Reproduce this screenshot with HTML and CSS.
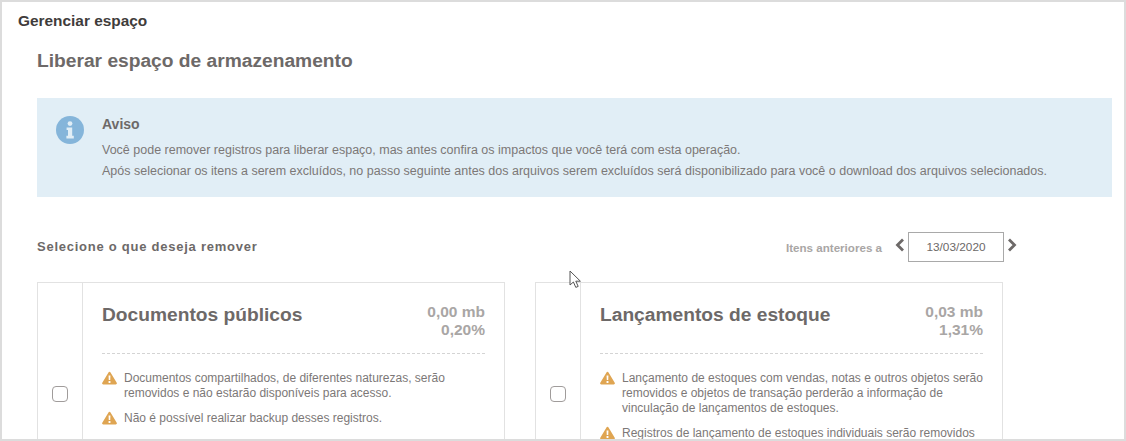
FILE: index.html
```html
<!DOCTYPE html>
<html lang="pt-BR">
<head>
    <meta charset="UTF-8">
    <title>Gerenciar espaço</title>
    <link rel="stylesheet" href="styles.css">
</head>
<body>
    <div class="frame">
        <div class="page-title">Gerenciar espaço</div>

        <div class="content">
            <h1>Liberar espaço de armazenamento</h1>

            <!-- Aviso -->
            <div class="notice">
                <svg class="notice-icon" viewBox="0 0 28 28">
                    <circle cx="14" cy="14" r="14" fill="#85b5da"/>
                    <circle cx="14" cy="7.6" r="2.4" fill="#e1eef6"/>
                    <path d="M10.6 11.4h5.6v8.4h1.6v2.6h-7.4v-2.6h1.6v-5.8h-1.4z" fill="#e1eef6"/>
                </svg>
                <div>
                    <h2>Aviso</h2>
                    <p>Você pode remover registros para liberar espaço, mas antes confira os impactos que você terá com esta operação.</p>
                    <p>Após selecionar os itens a serem excluídos, no passo seguinte antes dos arquivos serem excluídos será disponibilizado para você o download dos arquivos selecionados.</p>
                </div>
            </div>

            <div class="toolbar">
                <div class="select-label">Selecione o que deseja remover</div>
                <div class="date-filter">
                    <span class="date-label">Itens anteriores a</span>
                    <svg class="chevron" viewBox="0 0 10 14"><path d="M8 1.5 2.5 7 8 12.5" /></svg>
                    <div class="date-input">13/03/2020</div>
                    <svg class="chevron" viewBox="0 0 10 14"><path d="M2 1.5 7.5 7 2 12.5" /></svg>
                </div>
            </div>

            <div class="cards">
                <div class="card">
                    <div class="card-check"><span class="checkbox"></span></div>
                    <div class="card-body">
                        <div class="card-head">
                            <h3>Documentos públicos</h3>
                            <div class="card-size">0,00 mb<br>0,20%</div>
                        </div>
                        <ul class="warnings">
                            <li>
                                <svg class="warn" viewBox="0 0 16 14"><path d="M8 0.4c.5 0 .9.3 1.1.7l6.6 11c.5.8-.1 1.7-1 1.7H1.3c-.9 0-1.5-.9-1-1.7l6.6-11C7.1.7 7.5.4 8 .4z" fill="#dfa552"/><path d="M7 4.2h2l-.2 5H7.2zM7 10.2h2v2H7z" fill="#fff"/></svg>
                                <span>Documentos compartilhados, de diferentes naturezas, serão removidos e não estarão disponíveis para acesso.</span>
                            </li>
                            <li>
                                <svg class="warn" viewBox="0 0 16 14"><path d="M8 0.4c.5 0 .9.3 1.1.7l6.6 11c.5.8-.1 1.7-1 1.7H1.3c-.9 0-1.5-.9-1-1.7l6.6-11C7.1.7 7.5.4 8 .4z" fill="#dfa552"/><path d="M7 4.2h2l-.2 5H7.2zM7 10.2h2v2H7z" fill="#fff"/></svg>
                                <span>Não é possível realizar backup desses registros.</span>
                            </li>
                        </ul>
                    </div>
                </div>

                <div class="card">
                    <div class="card-check"><span class="checkbox"></span></div>
                    <div class="card-body">
                        <div class="card-head">
                            <h3>Lançamentos de estoque</h3>
                            <div class="card-size">0,03 mb<br>1,31%</div>
                        </div>
                        <ul class="warnings">
                            <li>
                                <svg class="warn" viewBox="0 0 16 14"><path d="M8 0.4c.5 0 .9.3 1.1.7l6.6 11c.5.8-.1 1.7-1 1.7H1.3c-.9 0-1.5-.9-1-1.7l6.6-11C7.1.7 7.5.4 8 .4z" fill="#dfa552"/><path d="M7 4.2h2l-.2 5H7.2zM7 10.2h2v2H7z" fill="#fff"/></svg>
                                <span>Lançamento de estoques com vendas, notas e outros objetos serão removidos e objetos de transação perderão a informação de vinculação de lançamentos de estoques.</span>
                            </li>
                            <li>
                                <svg class="warn" viewBox="0 0 16 14"><path d="M8 0.4c.5 0 .9.3 1.1.7l6.6 11c.5.8-.1 1.7-1 1.7H1.3c-.9 0-1.5-.9-1-1.7l6.6-11C7.1.7 7.5.4 8 .4z" fill="#dfa552"/><path d="M7 4.2h2l-.2 5H7.2zM7 10.2h2v2H7z" fill="#fff"/></svg>
                                <span>Registros de lançamento de estoques individuais serão removidos</span>
                            </li>
                        </ul>
                    </div>
                </div>
            </div>
        </div>

        <!-- Mouse pointer caught in the capture -->
        <svg class="cursor" viewBox="0 0 14 20"><path d="M1 1v14l3.4-3 2.4 5.4 2.4-1-2.4-5.2h4.6z" fill="#fff" stroke="#555" stroke-width="1"/></svg>
    </div>
</body>
</html>
```

FILE: styles.css
```css
* {
    box-sizing: border-box;
}

html, body {
    height: 100%;
}

body {
    margin: 0;
    overflow: hidden;
    background: #fff;
    font-family: "Liberation Sans", Arial, sans-serif;
    color: #6d6968;
}

.frame {
    position: relative;
    height: 441px;
    width: 1126px;
    border: 2px solid #dcdcdc;
    overflow: hidden;
}

.page-title {
    padding: 11px 0 0 16px;
    height: 47px;
    font-size: 15.4px;
    line-height: 16px;
    font-weight: bold;
    color: #3f3c3b;
}

.content {
    padding: 0 0 0 35px;
}

h1 {
    margin: 0;
    font-size: 19.2px;
    line-height: 24px;
    font-weight: bold;
    color: #6d6968;
}

/* Notice */
.notice {
    display: flex;
    margin-top: 25px;
    height: 99px;
    margin-right: 12px;
    padding: 18px 19px 0;
    background: #e1eef6;
}

.notice-icon {
    width: 28px;
    height: 28px;
    flex-shrink: 0;
    margin-right: 18px;
}

.notice h2 {
    margin: 0 0 8px;
    font-size: 14px;
    line-height: 16px;
    font-weight: bold;
    color: #6d6968;
}

.notice p {
    margin: 0;
    font-size: 12.5px;
    line-height: 21px;
    color: #7c7877;
}

/* Toolbar */
.toolbar {
    display: flex;
    align-items: center;
    justify-content: space-between;
    width: 980px;
    margin-top: 35px;
    height: 30px;
}

.select-label {
    margin-top: -2px;
    font-size: 13px;
    font-weight: bold;
    letter-spacing: 0.75px;
    color: #6d6968;
}

.date-filter {
    display: flex;
    align-items: center;
}

.date-label {
    margin-right: 13px;
    font-size: 11.6px;
    font-weight: bold;
    color: #a9a6a5;
}

.chevron {
    width: 10px;
    height: 14px;
    margin-top: -4px;
    fill: none;
    stroke: #6d6968;
    stroke-width: 2.8;
}

.date-input {
    width: 96px;
    height: 30px;
    margin: 0 3px;
    border: 1px solid #a9a9a9;
    text-align: center;
    font-size: 11.8px;
    line-height: 28px;
    color: #6d6968;
}

/* Cards */
.cards {
    display: flex;
    gap: 30px;
    margin-top: 20px;
}

.card {
    display: flex;
    width: 468px;
    height: 200px;
    border: 1px solid #e2e2e2;
}

.card-check {
    display: flex;
    justify-content: center;
    align-items: flex-start;
    width: 45px;
    padding-top: 103px;
    border-right: 1px solid #e2e2e2;
}

.checkbox {
    width: 16px;
    height: 16px;
    border: 1px solid #a09c9b;
    border-radius: 4px;
}

.card-body {
    flex: 1;
    padding: 20px 19px 0 19px;
}

.card-head {
    display: flex;
    justify-content: space-between;
    height: 51px;
    border-bottom: 1px dashed #d4d4d4;
}

h3 {
    margin: 0;
    font-size: 19.2px;
    line-height: 24px;
    font-weight: bold;
    color: #6d6968;
}

.card-size {
    font-size: 15.5px;
    line-height: 18px;
    font-weight: bold;
    text-align: right;
    color: #a9a6a5;
}

.warnings {
    list-style: none;
    margin: 17px 0 0;
    padding: 0;
}

.warnings li {
    display: flex;
    margin-bottom: 10px;
    font-size: 12px;
    line-height: 15px;
    color: #7c7877;
}

.warn {
    width: 15px;
    height: 14px;
    flex-shrink: 0;
    margin: 0 7px 0 0;
}

.cursor {
    position: absolute;
    left: 567px;
    top: 268px;
    width: 14px;
    height: 20px;
}
```
